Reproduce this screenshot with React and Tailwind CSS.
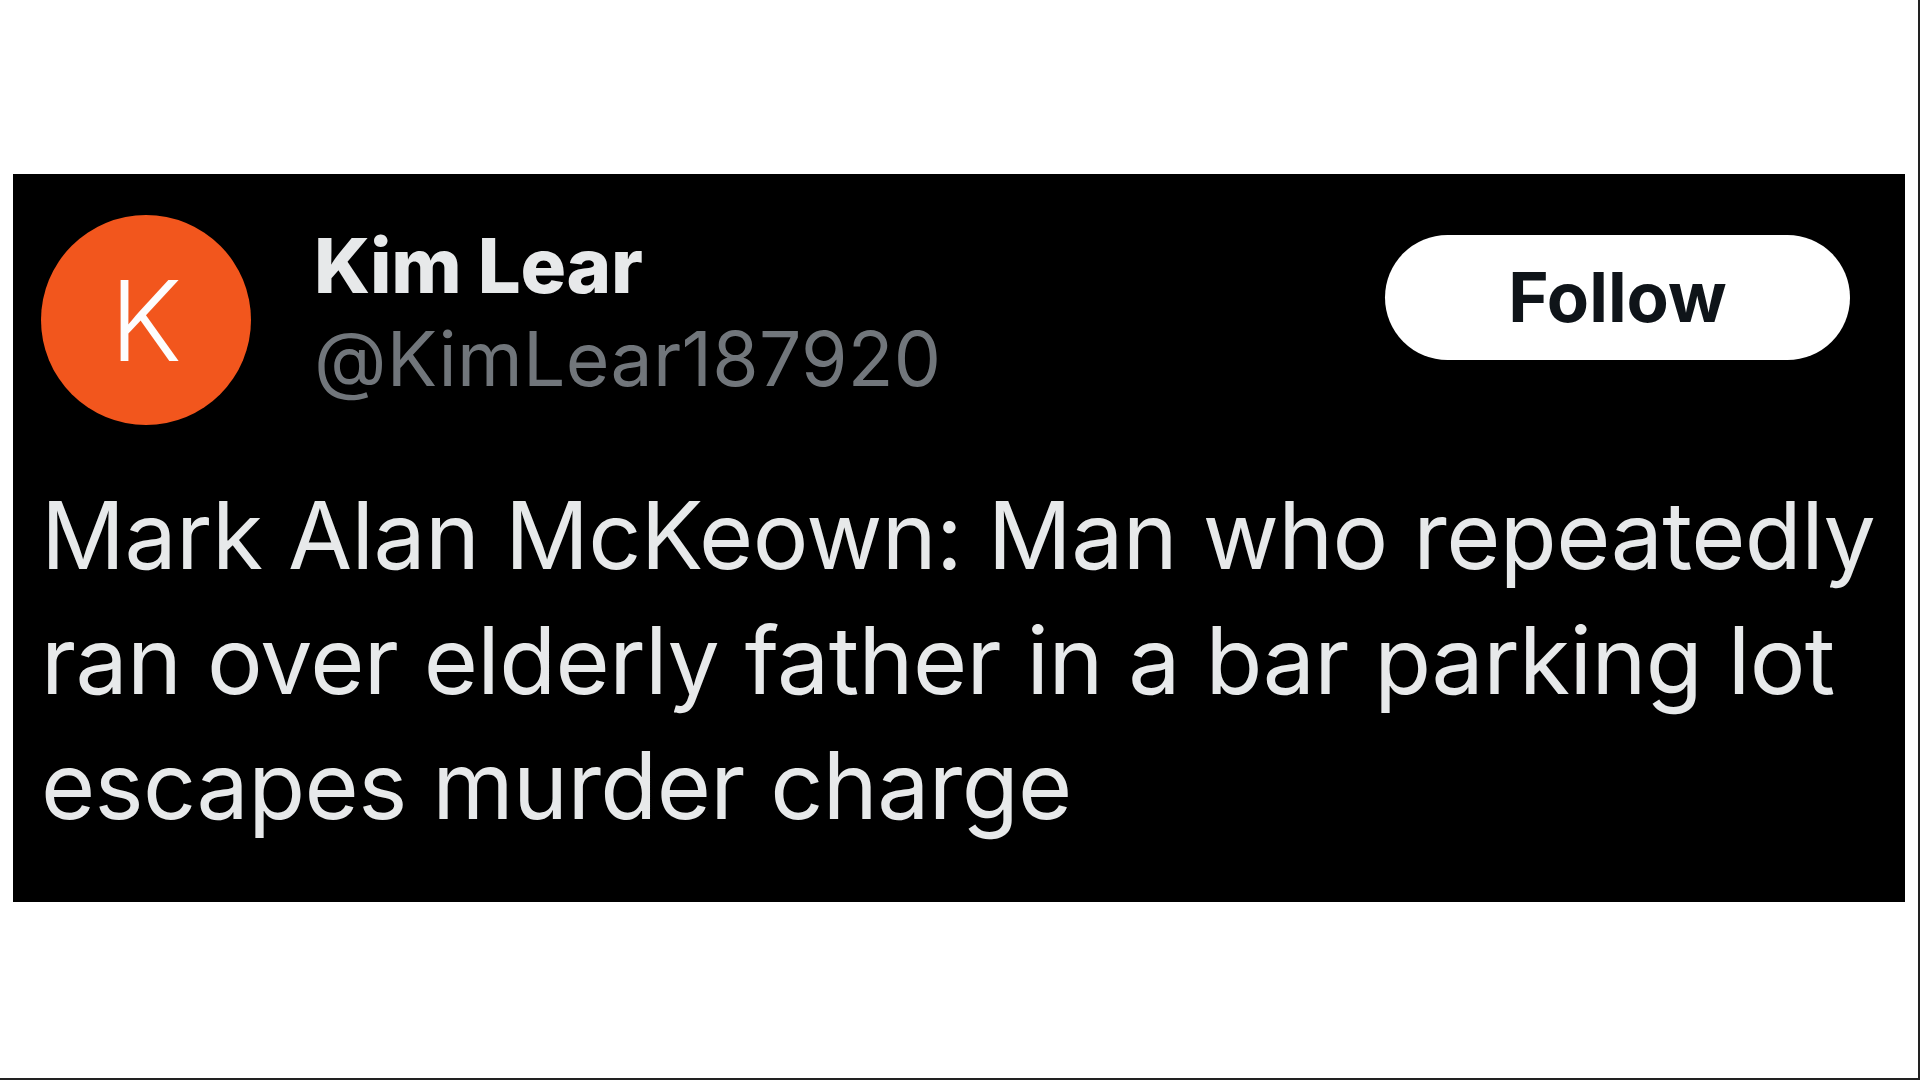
const font = { fontFamily: 'Inter, "Noto Sans", sans-serif' };

const App = () => {
  return (
    <div
      className="w-full h-screen bg-white pt-[174px] pl-[13px] border-b-2 border-r-2 border-[#222]"
      style={font}
    >
      <div className="w-[1892px] h-[728px] bg-black px-[28px] pt-[41px]">
        {/* header */}
        <div className="flex items-start pr-[27px]">
          <div className="w-[210px] h-[210px] shrink-0 rounded-full bg-[#f2561d] flex items-center justify-center text-[#fdfdfd] text-[111px] leading-none font-light">
            K
          </div>
          <div className="ml-[63px] mt-[12px]">
            <div className="text-[76px] leading-none font-extrabold text-[#e7e9ea] tracking-[-0.3px]">Kim Lear</div>
            <div className="mt-[18px] text-[75px] leading-none text-[#71767b] tracking-[0.3px]">@KimLear187920</div>
          </div>
          <button className="ml-auto mt-[20px] w-[465px] h-[125px] rounded-full bg-white text-[#0f1419] text-[69px] font-bold leading-none flex items-center justify-center">
            Follow
          </button>
        </div>

        {/* tweet text */}
        <p className="mt-[48px] w-[1860px] text-[93px] leading-[125px] tracking-[-0.6px] text-[#e7e9ea]">
          Mark Alan McKeown: Man who repeatedly ran over elderly father in a bar parking lot escapes murder charge
        </p>
      </div>
    </div>
  );
};

export default App;
